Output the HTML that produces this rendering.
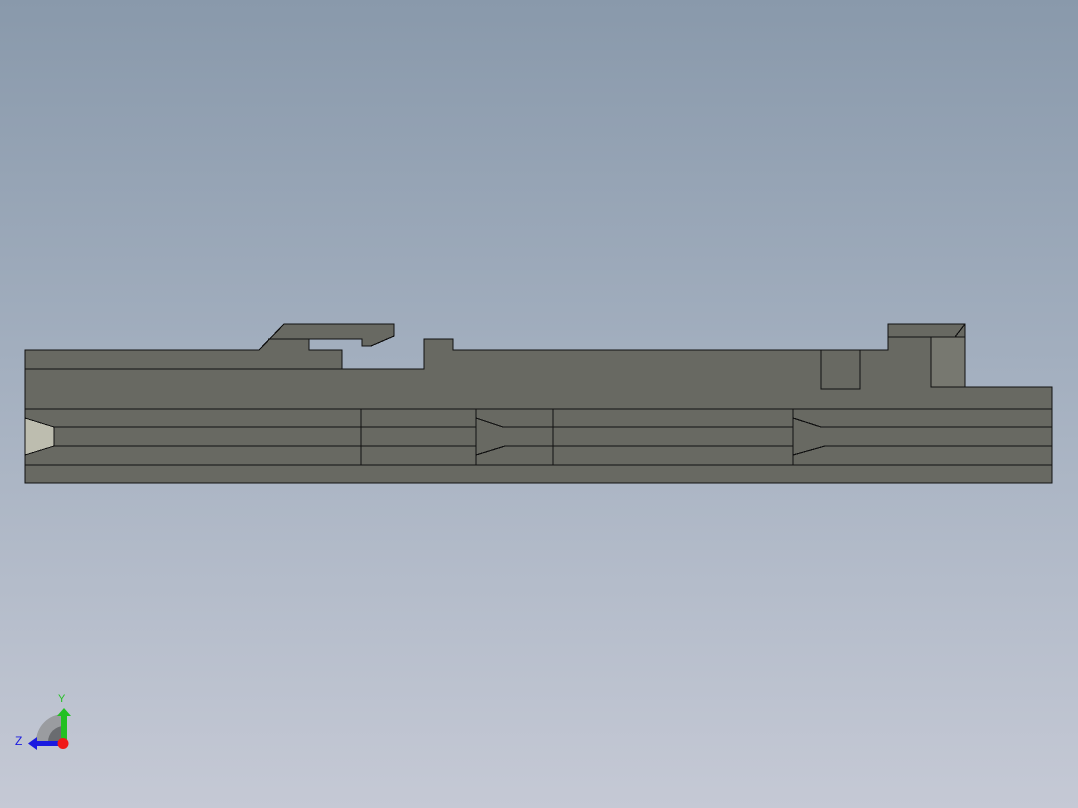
<!DOCTYPE html>
<html><head><meta charset="utf-8"><style>
html,body{margin:0;padding:0;width:1078px;height:808px;overflow:hidden}
body{background:linear-gradient(#8999ab 0%,#a3afbf 45%,#c5c9d5 100%);font-family:"Liberation Sans",sans-serif}
</style></head><body>
<svg width="1078" height="808" style="position:absolute;left:0;top:0" shape-rendering="crispEdges">
<g fill="#686962" stroke="#111" stroke-width="1.2">
<path d="M25,350 H259 L284,324 H394 V336 L371,346 H362 V339 H309 V350 H342 V369 H424 V339 H453 V350 H888 V324 H965 V387 H1052 V483 H25 Z"/>
</g>
<path d="M931,337 H965 V387 H931 Z" fill="#777870" stroke="#111" stroke-width="1.2"/>
<path d="M25,418 L54,427 V446 L25,455 Z" fill="#bdbdaf" stroke="#111" stroke-width="1"/>
<g stroke="#111" stroke-width="1.2" fill="none">
<path d="M268,339 H309"/>
<path d="M25,369 H342"/>
<path d="M821,350 V389 H860 V350"/>
<path d="M888,337 H955 L965,324"/>
<path d="M25,409 H1052"/>
<path d="M25,465 H1052"/>
<path d="M54,427 H476 M503,427 H793 M821,427 H1052"/>
<path d="M54,446 H476 M505,446 H793 M825,446 H1052"/>
<path d="M361,409 V465 M476,409 V465 M553,409 V465 M793,409 V465"/>
<path d="M476,418 L503,427 M476,455 L505,446 M793,418 L821,427 M793,455 L825,446"/>
</g>
</svg>
<svg width="100" height="80" style="position:absolute;left:0;top:680" >
<path d="M36,62 A28,28 0 0 1 64,34 V62 Z" fill="#9a9ca0"/>
<path d="M48,62 A16,16 0 0 1 64,46 V62 Z" fill="#6a6c70"/>
<rect x="61" y="34" width="6" height="28" fill="#22c022"/>
<path d="M57,36 L64,28 L71,36 Z" fill="#22c022"/>
<rect x="36" y="61" width="28" height="5" fill="#1a1ae0"/>
<path d="M37,57 L28,63.5 L37,70 Z" fill="#1a1ae0"/>
<circle cx="63" cy="63.5" r="5.5" fill="#f01818"/>
<text x="58" y="22" fill="#22c022" font-size="11" font-family="Liberation Sans">Y</text>
<text x="15" y="65" fill="#1a1ae0" font-size="12" font-family="Liberation Sans">Z</text>
</svg>
</body></html>
